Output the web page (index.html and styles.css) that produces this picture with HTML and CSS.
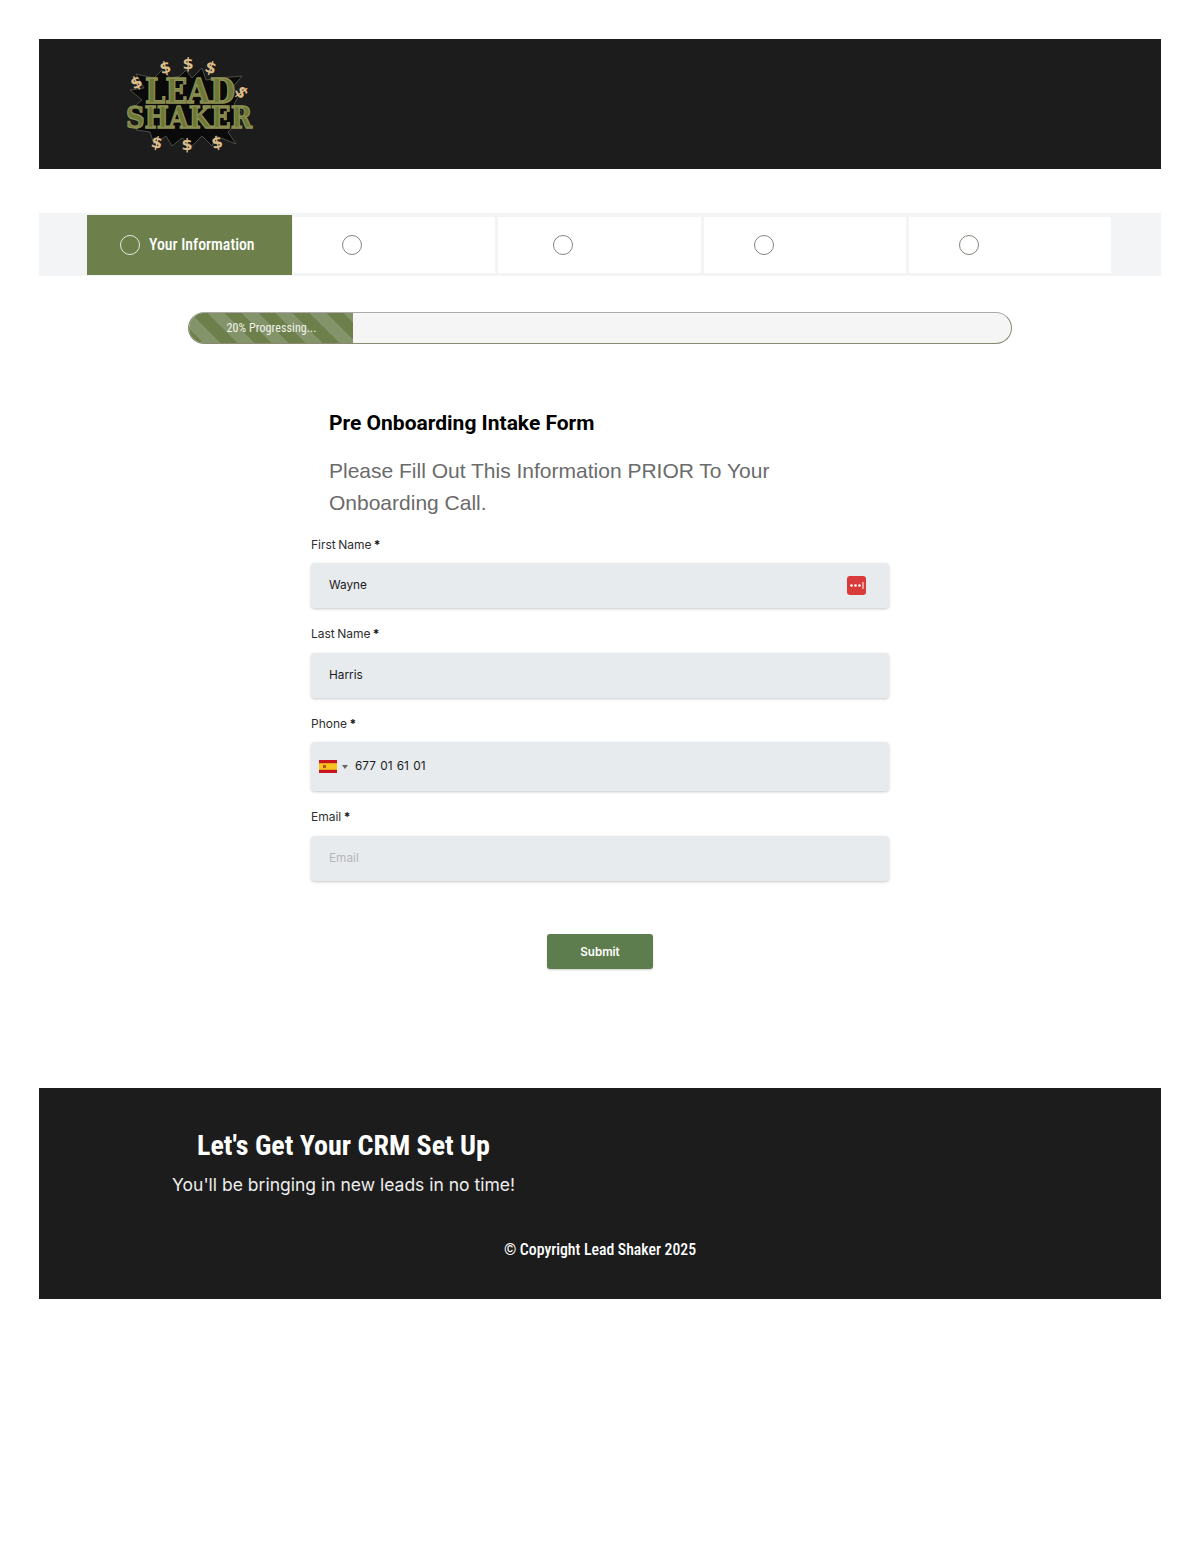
FILE: index.html
```html
<!DOCTYPE html>
<html lang="en">
<head>
    <meta charset="UTF-8">
    <meta name="viewport" content="width=device-width, initial-scale=1.0">
    <title>Pre Onboarding Intake Form</title>
    <link rel="stylesheet" href="styles.css">
</head>
<body>
    <div class="page">
        <header class="top-bar">
            <svg class="logo" width="170" height="112" viewBox="-20 -6 170 112" role="img" aria-label="Lead Shaker">
                <polygon class="burst" points="12,18 30,22 38,14 46,22 56,20 62,14 68,22 78,12 82,24 96,22 118,20 108,32 116,38 110,48 118,56 110,70 104,76 112,88 92,80 88,90 78,80 68,90 58,82 48,90 42,80 30,88 26,76 12,74 20,62 4,56 18,44 6,34 20,32"/>
                <text class="logo-word logo-lead" x="66" y="47" text-anchor="middle" textLength="90" lengthAdjust="spacingAndGlyphs">LEAD</text>
                <text class="logo-word logo-shaker" x="65" y="72" text-anchor="middle" textLength="126" lengthAdjust="spacingAndGlyphs">SHAKER</text>
                <text class="logo-cash" x="41" y="17" transform="rotate(-15 41 11)">$</text>
                <text class="logo-cash" x="64" y="13">$</text>
                <text class="logo-cash" x="87" y="17" transform="rotate(18 87 11)">$</text>
                <text class="logo-cash" x="12" y="32" transform="rotate(-25 12 26)">$</text>
                <text class="logo-cash" x="118" y="42" transform="rotate(55 118 36)">$</text>
                <text class="logo-cash" x="33" y="92" transform="rotate(12 33 86)">$</text>
                <text class="logo-cash" x="63" y="94">$</text>
                <text class="logo-cash" x="93" y="92" transform="rotate(-12 93 86)">$</text>
            </svg>
        </header>

        <nav class="steps">
            <div class="step step-active"><span class="step-dot"></span><span class="step-name">Your Information</span></div>
            <div class="step step-two"><span class="step-dot"></span></div>
            <div class="step step-three"><span class="step-dot"></span></div>
            <div class="step step-four"><span class="step-dot"></span></div>
            <div class="step step-five"><span class="step-dot"></span></div>
        </nav>

        <div class="progress">
            <div class="progress-fill">20% Progressing...</div>
        </div>

        <main class="form-wrap">
            <h1>Pre Onboarding Intake Form</h1>
            <p class="intro">Please Fill Out This Information PRIOR To Your Onboarding Call.</p>

            <form class="intake-form" onsubmit="event.preventDefault();">
                <label class="field-label" for="first">First Name <b>*</b></label>
                <div class="field">
                    <input id="first" type="text" value="Wayne">
                    <svg class="pass-icon" width="19" height="19" viewBox="0 0 19 19" aria-hidden="true">
                        <rect width="19" height="19" rx="3" fill="#d93a3a"/>
                        <circle cx="4.5" cy="9.5" r="1.3" fill="#fff"/>
                        <circle cx="8.5" cy="9.5" r="1.3" fill="#fff"/>
                        <circle cx="12.5" cy="9.5" r="1.3" fill="#fff"/>
                        <rect x="15.5" y="6" width="1" height="7" fill="#fff"/>
                    </svg>
                </div>

                <label class="field-label" for="last">Last Name <b>*</b></label>
                <div class="field">
                    <input id="last" type="text" value="Harris">
                </div>

                <label class="field-label" for="phone">Phone <b>*</b></label>
                <div class="field field-phone">
                    <svg class="flag" width="18" height="13" viewBox="0 0 18 13" aria-hidden="true">
                        <rect width="18" height="13" fill="#c8141e"/>
                        <rect y="3.2" width="18" height="6.6" fill="#f6c21c"/>
                        <rect x="4" y="5" width="3" height="3" fill="#b5532a"/>
                    </svg>
                    <span class="caret"></span>
                    <input id="phone" type="tel" value="677 01 61 01">
                </div>

                <label class="field-label" for="email">Email <b>*</b></label>
                <div class="field">
                    <input id="email" type="email" placeholder="Email">
                </div>

                <button class="submit-btn" type="submit">Submit</button>
            </form>
        </main>

        <footer class="site-footer">
            <div class="footer-pitch">
                <h2>Let's Get Your CRM Set Up</h2>
                <p>You'll be bringing in new leads in no time!</p>
            </div>
            <p class="copyright">© Copyright Lead Shaker 2025</p>
        </footer>
    </div>
</body>
</html>
```

FILE: styles.css
```css
body {
    margin: 0;
    background: #fff;
    font-family: 'Inter', sans-serif;
}

.page {
    padding: 39px;
    height: 1552px;
    box-sizing: border-box;
}

.top-bar {
    height: 130px;
    background-color: #1c1c1c;
    padding: 11px 0 0 65px;
    box-sizing: border-box;
    overflow: hidden;
}

.logo {
    display: block;
}

.burst {
    fill: #0a0a0a;
    stroke: #66665a;
    stroke-width: 0.7;
}

.logo-word {
    font-family: 'DejaVu Serif', serif;
    font-weight: 700;
    fill: #6a7838;
    stroke: #8f9155;
    stroke-width: 1.4;
}

.logo-lead {
    font-size: 33px;
}

.logo-shaker {
    font-size: 30px;
}

.logo-cash {
    font-family: 'DejaVu Sans', sans-serif;
    font-weight: 700;
    font-size: 16px;
    fill: #dcbd8a;
    text-anchor: middle;
}

/* Steps */
.steps {
    display: flex;
    gap: 3px;
    height: 63px;
    margin-top: 44px;
    padding: 4px 50px 3px 48px;
    box-sizing: border-box;
    background-color: #f3f4f6;
}

.step {
    flex: 1;
    display: flex;
    align-items: center;
    gap: 9px;
    background-color: #fff;
}

.step-active {
    flex: 0 0 205px;
    margin: -2px -2px -2px 0;
    background-color: #6d7f4b;
    color: #fff;
    font-family: 'Roboto', sans-serif;
    font-size: 15.8px;
    font-weight: 500;
    font-stretch: 75%;
    z-index: 1;
}

.step-name {
    margin-top: -2px;
}

.step-dot {
    width: 20px;
    height: 20px;
    margin-left: 49px;
    box-sizing: border-box;
    border: 1px solid #85857d;
    border-radius: 50%;
}

.step-active .step-dot {
    margin-left: 33px;
    border-color: #e6e9dc;
}

.step-three .step-dot {
    margin-left: 55px;
}

.step-four .step-dot,
.step-five .step-dot {
    margin-left: 50px;
}

/* Progress */
.progress {
    width: 824px;
    height: 32px;
    margin: 36px auto 0;
    box-sizing: border-box;
    background-color: #f5f5f5;
    border: 1px solid #8a8a72;
    border-top-color: #aaa;
    border-radius: 16px;
    overflow: hidden;
}

.progress-fill {
    width: 165px;
    height: 32px;
    margin: -1px 0 0 -1px;
    padding-left: 2px;
    box-sizing: border-box;
    display: flex;
    align-items: center;
    justify-content: center;
    background: repeating-linear-gradient(45deg, #6d7f4b 0, #6d7f4b 12px, #84946a 12px, #84946a 24px);
    color: #f1f3ea;
    font-family: 'Roboto', sans-serif;
    font-size: 12px;
    font-stretch: 85%;
    letter-spacing: 0.1px;
}

/* Form */
.form-wrap {
    width: 578px;
    margin: 0 auto;
}

.form-wrap h1 {
    margin: 66px 0 0 18px;
    font-family: 'Roboto', sans-serif;
    font-size: 21px;
    line-height: 26px;
    font-weight: 700;
    color: #000;
}

.intro {
    margin: 19px 0 0 18px;
    width: 470px;
    font-family: 'Liberation Sans', sans-serif;
    font-size: 21px;
    line-height: 32px;
    color: #6b6b6b;
}

.intake-form {
    display: flex;
    flex-direction: column;
}

.field-label {
    margin-top: 18px;
    height: 18px;
    font-size: 12px;
    line-height: 16px;
    word-spacing: -1px;
    color: #2f2f2f;
}

.field-label b {
    color: #111;
}

.field-label:first-child {
    margin-top: 17px;
    line-height: 18px;
}

.field {
    display: flex;
    align-items: center;
    height: 45px;
    margin-top: 9px;
    padding: 0 23px 0 18px;
    box-sizing: border-box;
    background-color: #e8ebee;
    border-radius: 4px;
    box-shadow: 0 1px 3px rgba(0, 0, 0, 0.22);
}

.field input {
    flex: 1;
    min-width: 0;
    margin-top: -2px;
    border: none;
    outline: none;
    background: transparent;
    padding: 0;
    font-family: 'Inter', sans-serif;
    font-size: 11.8px;
    color: #1a1a1a;
}

.field input::placeholder {
    color: #b3b6ba;
}

.field-phone {
    height: 49px;
    margin-top: 8px;
    padding-left: 8px;
}

.field-phone input {
    word-spacing: 1px;
}

.caret {
    width: 0;
    height: 0;
    margin: 0 7px 0 5px;
    border-left: 3px solid transparent;
    border-right: 3px solid transparent;
    border-top: 4px solid #666;
}

.submit-btn {
    align-self: center;
    width: 106px;
    height: 35px;
    margin-top: 53px;
    border: none;
    border-radius: 3px;
    background-color: #5e7d4f;
    color: #fff;
    font-family: 'Inter', sans-serif;
    font-size: 11.6px;
    font-weight: 600;
    box-shadow: 0 1px 2px rgba(0, 0, 0, 0.2);
    cursor: pointer;
}

/* Footer */
.site-footer {
    height: 211px;
    margin-top: 119px;
    padding: 41px 0 0 133px;
    box-sizing: border-box;
    background-color: #1c1c1c;
    color: #fff;
}

.footer-pitch {
    width: fit-content;
    text-align: center;
}

.footer-pitch h2 {
    margin: 0;
    font-family: 'Roboto', sans-serif;
    font-size: 28px;
    line-height: 34px;
    font-weight: 700;
    font-stretch: 75%;
}

.footer-pitch p {
    margin: 9px 0 0;
    font-size: 17.5px;
    line-height: 26px;
    color: #eee;
}

.copyright {
    margin: 42px 0 0 -133px;
    text-align: center;
    font-family: 'Roboto', sans-serif;
    font-size: 15.75px;
    line-height: 20px;
    font-weight: 500;
    font-stretch: 75%;
}
```
